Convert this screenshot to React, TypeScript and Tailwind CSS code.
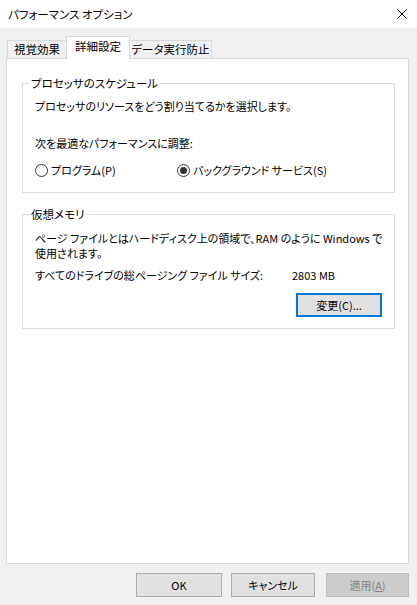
import React from "react";

const font = "font-['Noto_Sans_CJK_JP','Noto_Sans',sans-serif] [font-feature-settings:'palt']";

function Radio({ checked, label, className = "" }: { checked?: boolean; label: string; className?: string }) {
    return (
        <div className={`flex items-center gap-[3px] ${className}`}>
            <span className="flex h-[13px] w-[13px] items-center justify-center rounded-full border border-[#333333] bg-white">
                {checked && <span className="h-[7px] w-[7px] rounded-full bg-[#333333]" />}
            </span>
            <span className="leading-[16px]">{label}</span>
        </div>
    );
}

function Group({ title, children, className = "" }: { title: string; children: React.ReactNode; className?: string }) {
    return (
        <fieldset className={`ml-[15px] w-[373px] min-w-0 border border-[#dcdcdc] ${className}`}>
            <legend className="ml-[6px] px-[2px] text-[11.5px] leading-[16px]">{title}</legend>
            {children}
        </fieldset>
    );
}

export default function App() {
    return (
        <div className={`flex h-[605px] w-[417px] flex-col bg-[#f0f0f0] text-[11px] text-black ${font}`}>
            {/* title bar */}
            <div className="flex h-[28px] items-center justify-between bg-white pl-[8px] pr-[10px]">
                <span className="text-[11.5px] leading-[16px]">パフォーマンス オプション</span>
                <svg width="10" height="10" viewBox="0 0 10 10" className="mt-[-1px]">
                    <path d="M0.5 0.5 L9.5 9.5 M9.5 0.5 L0.5 9.5" stroke="#000" strokeWidth="1" fill="none" />
                </svg>
            </div>

            <div className="flex flex-col pl-[6px] pt-[8px]">
                {/* tabs */}
                <div className="flex h-[22px] items-end whitespace-nowrap pl-[1px] text-[11.5px]">
                    <div className="flex h-[18px] w-[59px] items-center justify-center border-l border-t border-[#d9d9d9]">
                        視覚効果
                    </div>
                    <div className="relative z-10 mb-[-1px] flex h-[23px] w-[64px] justify-center border-x border-t border-[#d9d9d9] bg-white pt-[1px]">
                        詳細設定
                    </div>
                    <div className="flex h-[18px] w-[82px] items-center justify-center border-r border-t border-[#d9d9d9]">
                        データ実行防止
                    </div>
                </div>

                {/* panel */}
                <div className="h-[506px] w-[403px] border border-[#d9d9d9] bg-white pt-[16px]">
                    <Group title="プロセッサのスケジュール">
                        <div className="pb-[14px] pl-[12px] pt-[7px]">
                            <p className="leading-[16px]">プロセッサのリソースをどう割り当てるかを選択します。</p>
                            <p className="mt-[21px] leading-[16px]">次を最適なパフォーマンスに調整:</p>
                            <div className="mt-[11px] flex">
                                <Radio label="プログラム(P)" className="w-[142px]" />
                                <Radio checked label="バックグラウンド サービス(S)" />
                            </div>
                        </div>
                    </Group>

                    <Group title="仮想メモリ" className="mt-[13px]">
                        <div className="pb-[11px] pl-[12px] pr-[12px] pt-[9px]">
                            <p className="whitespace-nowrap leading-[15px]">
                                ページ ファイルとはハードディスク上の領域で、RAM のように Windows で
                                <br />
                                使用されます。
                            </p>
                            <div className="mt-[6px] flex whitespace-nowrap leading-[16px]">
                                <span className="w-[257px]">すべてのドライブの総ページング ファイル サイズ:</span>
                                <span>2803 MB</span>
                            </div>
                            <div className="mt-[10px] flex justify-end">
                                <button className="flex h-[24px] w-[86px] items-center justify-center border-2 border-[#0078d7] bg-[#e1e1e1]">
                                    変更(C)...
                                </button>
                            </div>
                        </div>
                    </Group>
                </div>
            </div>

            {/* footer buttons */}
            <div className="mt-[9px] flex pl-[136px]">
                <button className="flex h-[24px] w-[86px] items-center justify-center border border-[#adadad] bg-[#e1e1e1]">
                    OK
                </button>
                <button className="ml-[9px] flex h-[24px] w-[84px] items-center justify-center border border-[#adadad] bg-[#e1e1e1]">
                    キャンセル
                </button>
                <button className="ml-[11px] flex h-[24px] w-[83px] items-center justify-center border border-[#bfbfbf] bg-[#cccccc] text-[#838383]">
                    適用(<span className="underline">A</span>)
                </button>
            </div>
        </div>
    );
}
